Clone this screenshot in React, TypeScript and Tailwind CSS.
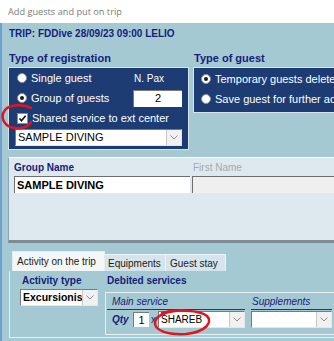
import React from "react";

function Radio({ checked }: { checked?: boolean }) {
  return (
    <span className="w-[10px] h-[10px] rounded-full bg-white border border-[#8f8f8f] flex items-center justify-center shrink-0">
      {checked && <span className="w-[4px] h-[4px] rounded-full bg-[#1a1a1a]" />}
    </span>
  );
}

function Arrow() {
  return (
    <span className="w-[15px] h-full bg-[#f1f1f1] border-l border-[#c8c8c8] flex items-center justify-center shrink-0">
      <svg width="8" height="5" viewBox="0 0 8 5">
        <path d="M0.5 0.5 L4 4 L7.5 0.5" stroke="#8a8a8a" strokeWidth="1" fill="none" />
      </svg>
    </span>
  );
}

function Select({ children, className }: { children?: React.ReactNode; className?: string }) {
  return (
    <div
      className={
        "flex bg-white border-t border-l border-[#7a7a7a] border-r border-b border-r-[#e6e6e6] border-b-[#e6e6e6] overflow-hidden " +
        (className || "")
      }
    >
      <div className="flex-1 flex items-center pl-[2px] whitespace-nowrap overflow-hidden">{children}</div>
      <Arrow />
    </div>
  );
}

export default function App() {
  return (
    <div className="w-[334px] h-[341px] overflow-hidden bg-white flex flex-col relative font-['Liberation_Sans',Arial,sans-serif]">
      <div className="h-[23px] shrink-0 pl-[8px] flex items-center text-[9.2px] text-[#7b7b7b] font-['Open_Sans',sans-serif]">
        Add guests and put on trip
      </div>
      <div className="flex-1 bg-[#a4c9d2] border-l-2 border-[#6f9fce] flex flex-col min-h-0">
        <div className="mt-[5px] ml-[7px] h-[12px] text-[10px] leading-[12px] font-bold text-[#15207a] whitespace-nowrap">
          TRIP: FDDive 28/09/23 09:00 LELIO
        </div>
        <div className="mt-[12px] flex items-start">
          <div className="ml-[6px] w-[181px] shrink-0">
            <div className="pl-[1px] h-[13px] text-[11px] leading-[13px] font-bold text-[#15207a]">
              Type of registration
            </div>
            <div className="mt-[2px] h-[83px] border border-[#d7e4ea] bg-[#1d3c73] text-white text-[11px]">
              <div className="h-[20px] flex items-center pl-[8px]">
                <Radio />
                <span className="ml-[4px] flex-1">Single guest</span>
                <span className="w-[49px] mr-[6px] pl-[1px] text-[10px]">N. Pax</span>
              </div>
              <div className="h-[20px] flex items-center pl-[8px]">
                <Radio checked />
                <span className="ml-[4px] flex-1">Group of guests</span>
                <span className="w-[49px] h-[17px] mr-[6px] bg-white text-black border-t border-l border-[#7a7a7a] flex items-center justify-center">
                  2
                </span>
              </div>
              <div className="h-[21px] flex items-center pl-[8px]">
                <span className="w-[11px] h-[11px] bg-white border border-[#8f8f8f] flex items-center justify-center shrink-0">
                  <svg width="9" height="9" viewBox="0 0 9 9">
                    <path d="M1.5 4.5 L3.5 6.8 L7.6 1.8" stroke="#111" strokeWidth="1.6" fill="none" />
                  </svg>
                </span>
                <span className="ml-[4px] whitespace-nowrap">Shared service to ext center</span>
              </div>
              <Select className="mx-[6px] h-[17px] text-black text-[11px]">SAMPLE DIVING</Select>
            </div>
          </div>
          <div className="ml-[4px] flex-1 min-w-0">
            <div className="pl-[1px] h-[13px] text-[11px] leading-[13px] font-bold text-[#15207a]">Type of guest</div>
            <div className="mt-[2px] h-[46px] border border-r-0 border-[#d7e4ea] bg-[#1d3c73] text-white text-[11px] pt-[1px] overflow-hidden">
              <div className="h-[20px] flex items-center pl-[7px] whitespace-nowrap">
                <Radio checked />
                <span className="ml-[4px]">Temporary guests deleted</span>
              </div>
              <div className="h-[20px] flex items-center pl-[7px] whitespace-nowrap">
                <Radio />
                <span className="ml-[4px]">Save guest for further activities</span>
              </div>
            </div>
          </div>
        </div>

        <div className="mt-[7px] ml-[6px] h-[86px] shrink-0 bg-[#dde9ee] border-t border-white border-l border-l-[#8aa7b6] border-b-[3px] border-b-[#7e8b92] pt-[4px]">
          <div className="flex h-[12px] text-[10px] leading-[12px]">
            <span className="pl-[5px] w-[182px] font-bold text-[#15207a]">Group Name</span>
            <span className="pl-[2px] text-[#a3a9ad]">First Name</span>
          </div>
          <div className="flex mt-[2px] pl-[5px] gap-[2px]">
            <div className="w-[176px] h-[17px] bg-white border-t border-l border-[#6e6e6e] flex items-center pl-[2px] text-[11px] font-bold text-black">
              SAMPLE DIVING
            </div>
            <div className="flex-1 h-[17px] bg-[#efefef] border-t border-l border-[#6e6e6e]" />
          </div>
        </div>

        <div className="mt-[8px] ml-[10px] flex items-end h-[20px] text-[10px] text-[#1a1a1a] whitespace-nowrap">
          <div className="w-[93px] h-[20px] bg-[#f4f7f8] border-t border-l border-r border-[#e3ecf0] flex items-center pl-[4px]">
            Activity on the trip
          </div>
          <div className="w-[61px] h-[17px] bg-[#d6e5eb] border-t border-r border-[#eef4f6] flex items-center pl-[3px]">
            Equipments
          </div>
          <div className="w-[60px] h-[17px] bg-[#d6e5eb] border-t border-r border-[#eef4f6] flex items-center pl-[4px]">
            Guest stay
          </div>
        </div>
        <div className="ml-[7px] h-[67px] shrink-0 border-l border-b border-[#e6eef1] pt-[4px] flex">
          <div className="ml-[10px] w-[78px] shrink-0">
            <div className="pl-[2px] h-[12px] text-[10px] leading-[12px] font-bold text-[#15207a]">Activity type</div>
            <Select className="mt-[2px] h-[17px] text-[10.5px] font-bold text-black">Excursionis</Select>
          </div>
          <div className="ml-[7px] flex-1 min-w-0">
            <div className="pl-[2px] h-[12px] text-[10px] leading-[12px] font-bold text-[#15207a] whitespace-nowrap">
              Debited services
            </div>
            <div className="mt-[5px] h-[43px] border border-r-0 border-[#e8f0f3] flex pl-[1px]">
              <div className="w-[138px] shrink-0">
                <div className="h-[17px] border-b border-[#1f3a7a] flex items-center pl-[5px] text-[10px] italic text-[#15207a]">
                  Main service
                </div>
                <div className="mt-[1px] h-[17px] flex items-center">
                  <span className="pl-[5px] w-[26px] text-[10px] italic font-bold text-[#15207a]">Qty</span>
                  <span className="w-[16px] h-[15px] bg-white border-t border-l border-[#7a7a7a] flex items-center justify-center text-[11px] text-black">
                    1
                  </span>
                  <span className="w-[9px] text-center text-[10px] text-[#15207a]">x</span>
                  <Select className="flex-1 h-[17px] text-[10px] text-black">SHAREB</Select>
                </div>
              </div>
              <div className="ml-[6px] flex-1 min-w-0 pr-[2px]">
                <div className="h-[17px] border-b border-[#1f3a7a] flex items-center pl-[1px] text-[10px] italic text-[#15207a]">
                  Supplements
                </div>
                <Select className="mt-[1px] h-[17px]" />
              </div>
            </div>
          </div>
        </div>
      </div>

      <svg className="absolute left-0 top-0 pointer-events-none" width="334" height="341" viewBox="0 0 334 341">
        <path
          d="M31 108 C 24 104, 10 104, 5 110 C 0 116, 3 125, 12 127.5 C 20 129.5, 29 127, 31 122"
          stroke="#e3141c"
          strokeWidth="2.5"
          fill="none"
          strokeLinecap="round"
        />
        <path
          d="M162 313 C 175 309, 200 310, 207 316 C 213 322, 206 332, 186 334 C 166 335, 154 330, 155 322 C 156 316, 165 312, 175 311"
          stroke="#e3141c"
          strokeWidth="2.5"
          fill="none"
          strokeLinecap="round"
        />
      </svg>
    </div>
  );
}
